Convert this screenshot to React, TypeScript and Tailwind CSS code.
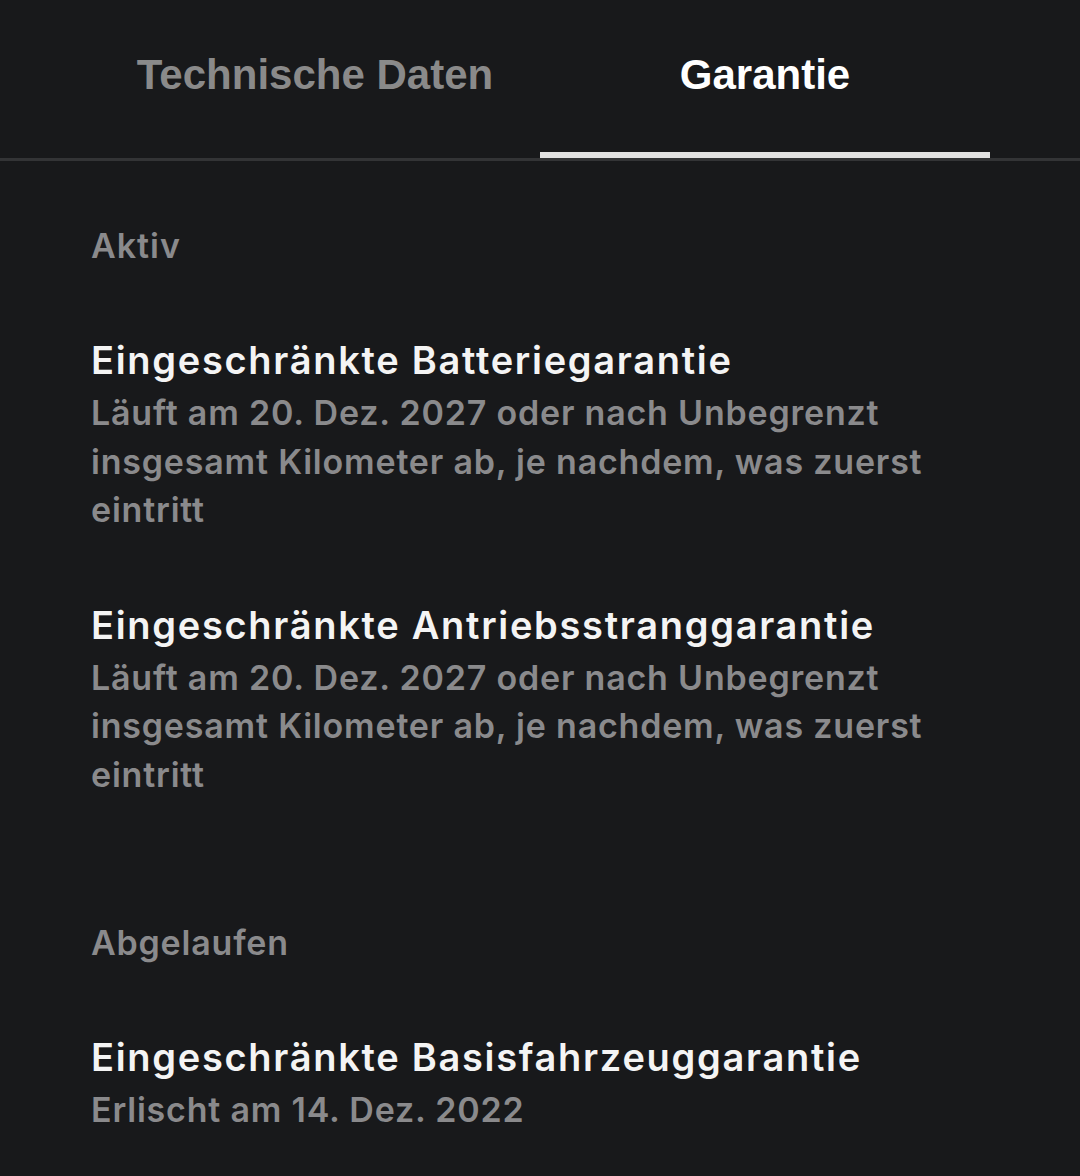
const warranties = {
  active: [
    {
      title: "Eingeschränkte Batteriegarantie",
      text: "Läuft am 20. Dez. 2027 oder nach Unbegrenzt insgesamt Kilometer ab, je nachdem, was zuerst eintritt",
    },
    {
      title: "Eingeschränkte Antriebsstranggarantie",
      text: "Läuft am 20. Dez. 2027 oder nach Unbegrenzt insgesamt Kilometer ab, je nachdem, was zuerst eintritt",
    },
  ],
  expired: [
    {
      title: "Eingeschränkte Basisfahrzeuggarantie",
      text: "Erlischt am 14. Dez. 2022",
    },
  ],
};

function Item({ title, text }: { title: string; text: string }) {
  return (
    <div className="mt-[64px]">
      <h3 className="text-[38px] leading-[52px] font-semibold tracking-[1.7px] text-[#f4f4f4]">{title}</h3>
      <p className="mt-[3px] max-w-[860px] text-[34px] leading-[48.5px] font-semibold tracking-[0.8px] text-[#8a8a8c]">
        {text}
      </p>
    </div>
  );
}

export default function App() {
  return (
    <div
      className="min-h-[1176px] bg-[#18191b]"
      style={{ fontFamily: "Inter, 'Noto Sans', sans-serif" }}
    >
      {/* Tabs */}
      <div className="flex px-[90px]" style={{ fontFamily: "'Liberation Sans', Arial, sans-serif" }}>
        <div className="flex h-[158px] w-1/2 items-center justify-center pb-[10px] text-[42px] font-bold text-[#8a8a8a]">
          Technische Daten
        </div>
        <div className="flex h-[158px] w-1/2 items-center justify-center border-b-[6px] border-[#e2e2e2] pb-[4px] text-[42px] font-bold text-white">
          Garantie
        </div>
      </div>
      <div className="h-[3px] bg-[#333436]" />

      {/* Content */}
      <main className="px-[91px] pb-10">
        <h2 className="mt-[61px] text-[34px] leading-[48px] font-semibold tracking-[1px] text-[#8a8a8c]">Aktiv</h2>
        {warranties.active.map((w) => (
          <Item key={w.title} {...w} />
        ))}

        <h2 className="mt-[120px] text-[34px] leading-[48px] font-semibold tracking-[0.8px] text-[#8a8a8c]">Abgelaufen</h2>
        {warranties.expired.map((w) => (
          <Item key={w.title} {...w} />
        ))}
      </main>
    </div>
  );
}
